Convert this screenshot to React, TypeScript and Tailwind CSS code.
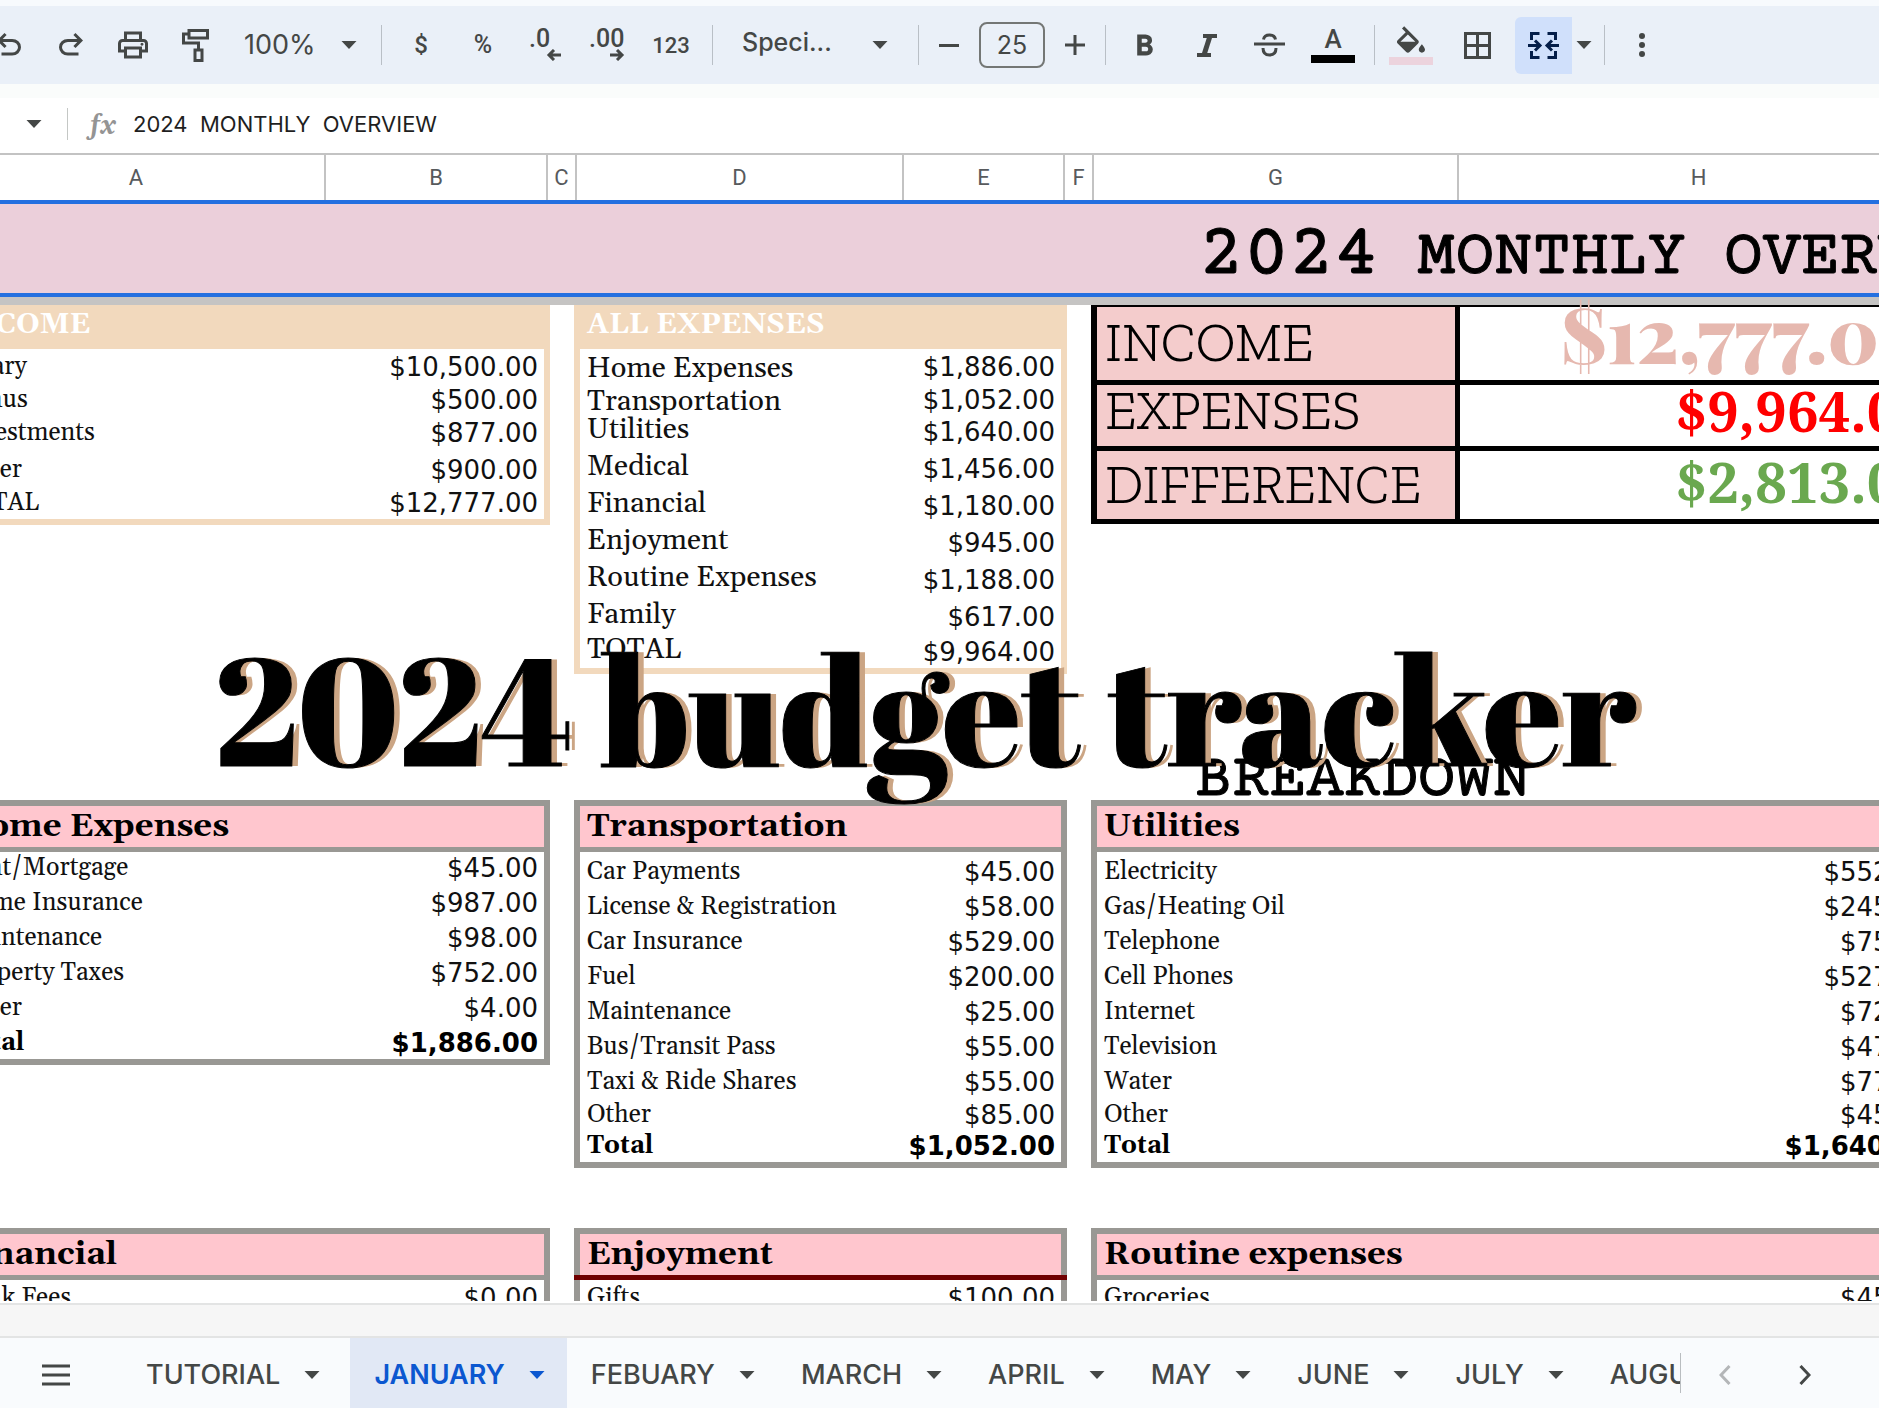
import type { ReactNode } from "react";

type Row = { label: string; amount: string; h: string; bold?: boolean; lift?: boolean };

const income: Row[] = [
  { label: "Salary", amount: "$10,500.00", h: "h-[33px]" },
  { label: "Bonus", amount: "$500.00", h: "h-[33px]" },
  { label: "Investments", amount: "$877.00", h: "h-[33px]" },
  { label: "Other", amount: "$900.00", h: "h-[37px]" },
  { label: "TOTAL", amount: "$12,777.00", h: "h-[33px]" },
];

const allExpenses: Row[] = [
  { label: "Home Expenses", amount: "$1,886.00", h: "h-[33px]" },
  { label: "Transportation", amount: "$1,052.00", h: "h-[33px]" },
  { label: "Utilities", amount: "$1,640.00", h: "h-[32px]", lift: true },
  { label: "Medical", amount: "$1,456.00", h: "h-[37px]", lift: true },
  { label: "Financial", amount: "$1,180.00", h: "h-[37px]", lift: true },
  { label: "Enjoyment", amount: "$945.00", h: "h-[37px]", lift: true },
  { label: "Routine Expenses", amount: "$1,188.00", h: "h-[37px]", lift: true },
  { label: "Family", amount: "$617.00", h: "h-[37px]", lift: true },
  { label: "TOTAL", amount: "$9,964.00", h: "h-[35px]", lift: true },
];

const home: Row[] = [
  { label: "Rent/Mortgage", amount: "$45.00", h: "h-[31px]" },
  { label: "Home Insurance", amount: "$987.00", h: "h-[35px]" },
  { label: "Maintenance", amount: "$98.00", h: "h-[35px]" },
  { label: "Property Taxes", amount: "$752.00", h: "h-[35px]" },
  { label: "Other", amount: "$4.00", h: "h-[35px]" },
  { label: "Total", amount: "$1,886.00", h: "h-[35px]", bold: true },
];

const transportation: Row[] = [
  { label: "Car Payments", amount: "$45.00", h: "h-[35px]" },
  { label: "License & Registration", amount: "$58.00", h: "h-[35px]" },
  { label: "Car Insurance", amount: "$529.00", h: "h-[35px]" },
  { label: "Fuel", amount: "$200.00", h: "h-[35px]" },
  { label: "Maintenance", amount: "$25.00", h: "h-[35px]" },
  { label: "Bus/Transit Pass", amount: "$55.00", h: "h-[35px]" },
  { label: "Taxi & Ride Shares", amount: "$55.00", h: "h-[35px]" },
  { label: "Other", amount: "$85.00", h: "h-[33px]" },
  { label: "Total", amount: "$1,052.00", h: "h-[31px]", bold: true },
];

const utilities: Row[] = [
  { label: "Electricity", amount: "$552.00", h: "h-[35px]" },
  { label: "Gas/Heating Oil", amount: "$245.00", h: "h-[35px]" },
  { label: "Telephone", amount: "$75.00", h: "h-[35px]" },
  { label: "Cell Phones", amount: "$527.00", h: "h-[35px]" },
  { label: "Internet", amount: "$72.00", h: "h-[35px]" },
  { label: "Television", amount: "$47.00", h: "h-[35px]" },
  { label: "Water", amount: "$77.00", h: "h-[35px]" },
  { label: "Other", amount: "$45.00", h: "h-[33px]" },
  { label: "Total", amount: "$1,640.00", h: "h-[31px]", bold: true },
];

const bankFees: Row[] = [{ label: "Bank Fees", amount: "$0.00", h: "h-[33px]" }];
const gifts: Row[] = [{ label: "Gifts", amount: "$100.00", h: "h-[33px]" }];
const groceries: Row[] = [{ label: "Groceries", amount: "$45.00", h: "h-[33px]" }];

const SHEET_GRID = "-ml-[55px] -mr-[64px] grid grid-cols-[605px_493px_minmax(0,1fr)] items-start gap-x-6";

function Caret({ className = "" }: { className?: string }) {
  return (
    <svg viewBox="0 0 16 8" className={`h-2 w-4 shrink-0 fill-current ${className}`} aria-hidden="true">
      <path d="M0.5 0h15L8 8z" />
    </svg>
  );
}

function Sep() {
  return <span className="mx-2 h-10 w-px shrink-0 bg-[#b9bfc6]" />;
}

function Tool({ label, w = "w-[62px]", children }: { label: string; w?: string; children: ReactNode }) {
  return (
    <button type="button" aria-label={label} className={`flex h-[58px] shrink-0 items-center justify-center ${w}`}>
      {children}
    </button>
  );
}

function Symbol({ d }: { d: string }) {
  return (
    <svg viewBox="0 -960 960 960" className="size-9 fill-current" aria-hidden="true">
      <path d={d} />
    </svg>
  );
}

function Toolbar() {
  return (
    <div className="border-t-[6px] border-[#f7fafd] bg-[#eaf0f8]">
      <div role="toolbar" aria-label="Formatting" className="-ml-[22px] flex h-[78px] items-center font-['Roboto','Liberation_Sans',sans-serif] text-[#444746]">
        <Tool label="Undo">
          <Symbol d="M280-200v-80h284q63 0 109.5-40T720-420q0-60-46.5-100T564-560H312l104 104-56 56-200-200 200-200 56 56-104 104h252q97 0 166.5 63T800-420q0 94-69.5 157T564-200H280Z" />
        </Tool>
        <Tool label="Redo">
          <Symbol d="M396-200q-97 0-166.5-63T160-420q0-94 69.5-157T396-640h252L544-744l56-56 200 200-200 200-56-56 104-104H396q-63 0-109.5 40T240-420q0 60 46.5 100T396-280h284v80H396Z" />
        </Tool>
        <Tool label="Print">
          <Symbol d="M640-640v-120H320v120h-80v-200h480v200h-80Zm-480 80h640-640Zm560 100q17 0 28.5-11.5T760-500q0-17-11.5-28.5T720-540q-17 0-28.5 11.5T680-500q0 17 11.5 28.5T720-460Zm-80 260v-160H320v160h320Zm80 80H240v-160H80v-240q0-51 35-85.5t85-34.5h560q51 0 85.5 34.5T880-520v240H720v160Zm80-240v-160q0-17-11.5-28.5T760-560H200q-17 0-28.5 11.5T160-520v160h80v-80h480v80h80Z" />
        </Tool>
        <Tool label="Paint format">
          <svg viewBox="0 0 27 33" className="h-[33px] w-[27px] fill-none stroke-current stroke-3" aria-hidden="true">
            <path d="M7 1.5h18.5v7.5H7zM7 5H1.5v9h15v6.5M13 21h7v10.5h-7z" />
          </svg>
        </Tool>
        <div className="relative w-[147px] shrink-0">
          <select aria-label="Zoom" className="h-[58px] w-full appearance-none bg-transparent pl-[18px] font-['Inter','Roboto',sans-serif] text-[27px]">
            <option>100%</option>
          </select>
          <Caret className="pointer-events-none absolute top-[25px] right-4" />
        </div>
        <Sep />
        <Tool label="Format as currency">
          <span className="text-2xl font-medium">$</span>
        </Tool>
        <Tool label="Format as percent">
          <span className="text-[25px] font-medium">%</span>
        </Tool>
        <Tool label="Decrease decimal places">
          <span className="flex w-8 flex-col text-left">
            <span className="text-[25px] leading-5 font-medium">.0</span>
            <svg viewBox="0 0 15 12" className="h-3 w-[15px] self-end fill-none stroke-current stroke-3" aria-hidden="true">
              <path d="M15 6H3M8 1L3 6l5 5" />
            </svg>
          </span>
        </Tool>
        <Tool label="Increase decimal places">
          <span className="flex w-9 flex-col text-left">
            <span className="text-[25px] leading-5 font-medium">.00</span>
            <svg viewBox="0 0 15 12" className="h-3 w-[15px] self-end fill-none stroke-current stroke-3" aria-hidden="true">
              <path d="M0 6h12M7 1l5 5-5 5" />
            </svg>
          </span>
        </Tool>
        <Tool label="More formats" w="w-[66px]">
          <span className="text-[22px] font-medium">123</span>
        </Tool>
        <Sep />
        <div className="relative w-[189px] shrink-0">
          <select aria-label="Font" className="h-[58px] w-full appearance-none bg-transparent pb-1 pl-[21px] font-['Inter','Roboto',sans-serif] text-[25px] font-medium">
            <option>Speci...</option>
          </select>
          <Caret className="pointer-events-none absolute top-[25px] right-[22px]" />
        </div>
        <Sep />
        <Tool label="Decrease font size" w="w-11">
          <span className="h-[3px] w-5 bg-current" />
        </Tool>
        <input aria-label="Font size" defaultValue="25" className="mx-2 h-[46px] w-[66px] shrink-0 rounded-lg border-2 border-[#747775] bg-transparent text-center font-['Inter','Roboto',sans-serif] text-[25px]" />
        <Tool label="Increase font size" w="w-11">
          <svg viewBox="0 0 20 20" className="size-5 stroke-current stroke-3" aria-hidden="true">
            <path d="M10 0v20M0 10h20" />
          </svg>
        </Tool>
        <Sep />
        <Tool label="Bold">
          <Symbol d="M272-200v-560h221q65 0 120 40t55 111q0 51-23 78.5T602-491q25 11 55.5 41t30.5 90q0 89-65 124.5T501-200H272Zm121-112h104q48 0 58.5-24.5T566-372q0-11-10.5-35.5T494-432H393v120Zm0-228h93q33 0 48-17t15-38q0-24-17-39t-44-15h-95v109Z" />
        </Tool>
        <Tool label="Italic">
          <svg viewBox="0 0 20 23" className="h-[23px] w-5 fill-none stroke-current" aria-hidden="true">
            <path d="M6 2h14M0 21h14" strokeWidth="4" />
            <path d="M13 2L7 21" strokeWidth="5" />
          </svg>
        </Tool>
        <Tool label="Strikethrough">
          <svg viewBox="0 0 31 24" className="h-6 w-[31px] fill-none stroke-current stroke-3" aria-hidden="true">
            <path d="M0 11h31M9.5 6.5C10 3.5 12 2 15.500 2s5.500 1.500 6 4.500M9 15c0 4.500 2.500 7 6.500 7s6.500-2.500 6.500-7" />
          </svg>
        </Tool>
        <Tool label="Text color" w="w-[66px]">
          <span className="flex flex-col items-center">
            <span className="text-[26px] leading-6 font-medium">A</span>
            <span className="mt-1 h-2 w-11 bg-black" />
          </span>
        </Tool>
        <Sep />
        <Tool label="Fill color" w="w-14">
          <span className="flex flex-col items-center">
            <svg viewBox="3 0 18 17" className="h-[27px] w-7 fill-current" aria-hidden="true">
              <path d="M16.56 8.94L7.620 0 6.210 1.410l2.380 2.380-5.150 5.150a1.490 1.490 0 000 2.120l5.500 5.500c.29.29.68.44 1.060.44s.77-.15 1.060-.44l5.500-5.500c.59-.58.59-1.530 0-2.120zM5.210 10L10 5.210 14.790 10H5.210zM19 11.500s-2 2.170-2 3.500c0 1.100.9 2 2 2s2-.9 2-2c0-1.330-2-3.500-2-3.500z" />
            </svg>
            <span className="mt-1 h-2 w-11 bg-[#ecd3dd]" />
          </span>
        </Tool>
        <Tool label="Borders" w="w-[76px]">
          <svg viewBox="0 0 27 27" className="size-[27px] fill-none stroke-current stroke-3" aria-hidden="true">
            <path d="M1.500 1.500h24v24h-24zM13.500 1v25M1 13.500h25" />
          </svg>
        </Tool>
        <button type="button" aria-label="Merge cells" aria-pressed="true" className="flex h-[57px] w-[57px] shrink-0 items-center justify-center rounded-l-md bg-[#d0e0fb] text-[#041e49]">
          <svg viewBox="0 0 31 27" className="h-[27px] w-[31px] fill-none stroke-current stroke-3" aria-hidden="true">
            <path d="M11.500 1.500H3.500V8M11.500 25.500H3.500V19M19.500 1.500h8V8M19.500 25.500h8V19M0 13.500h11M7 8.500l5 5-5 5M31 13.500H20M24 8.500l-5 5 5 5" />
          </svg>
        </button>
        <Tool label="Merge options" w="w-6">
          <Caret />
        </Tool>
        <Sep />
        <Tool label="More" w="w-[58px]">
          <svg viewBox="0 0 6 24" className="h-6 w-1.5 fill-current" aria-hidden="true">
            <circle cx="3" cy="3" r="3" />
            <circle cx="3" cy="12" r="3" />
            <circle cx="3" cy="21" r="3" />
          </svg>
        </Tool>
      </div>
    </div>
  );
}

function FormulaBar() {
  return (
    <div className="flex h-[69px] items-center border-t-[14px] border-[#fafcfb] bg-white pb-1">
      <button type="button" aria-label="Name box" className="flex h-10 w-[67px] shrink-0 items-center justify-center text-[#444746]">
        <Caret />
      </button>
      <span className="h-8 w-px bg-[#c4c7c5]" />
      <label htmlFor="formula" className="w-[65px] pt-1 pl-[22px] font-['Gelasio','Liberation_Serif',serif] text-[28px] leading-8 font-semibold text-[#949494] italic">
        fx
      </label>
      <input id="formula" defaultValue="2024  MONTHLY  OVERVIEW" className="h-10 flex-1 bg-transparent font-['Inter','Roboto',sans-serif] text-[22px] text-[#1f1f1f] outline-none" />
    </div>
  );
}

function ColumnHeaders() {
  return (
    <div className="-mr-[61px] -ml-[52px] grid h-[47px] grid-cols-[378px_222px_29px_327px_161px_29px_365px_minmax(0,1fr)] border-t-2 border-[#c3c3c3] bg-white font-['Roboto','Liberation_Sans',sans-serif] text-[22px] text-[#575a5d]">
      {["A", "B", "C", "D", "E", "F", "G", "H"].map((c) => (
        <div key={c} className="flex items-center justify-center border-r-2 border-[#c3c3c3]">
          {c}
        </div>
      ))}
    </div>
  );
}

function Rows({ rows, large = false }: { rows: Row[]; large?: boolean }) {
  return (
    <table className="mb-px w-full border-collapse text-[25px] leading-[30px] text-[#111]">
      <tbody>
        {rows.map((r) => (
          <tr key={r.label} className={r.bold ? "font-bold text-black" : ""}>
            <th scope="row" className={`p-0 pl-[7px] text-left align-bottom ${r.bold ? "font-bold" : "font-normal"}`}>
              <div className={`flex whitespace-nowrap ${r.h} ${large ? "text-[29px]" : ""} ${large && !r.lift ? "items-start overflow-hidden pt-[5px]" : "items-end"} ${r.lift ? "pb-0.5" : ""}`}>{r.label}</div>
            </th>
            <td className="p-0 pr-[6px] text-right align-bottom font-['DejaVu_Sans',Verdana,sans-serif] text-[26px]">{r.amount}</td>
          </tr>
        ))}
      </tbody>
    </table>
  );
}

function PeachPanel({ title, rows, large }: { title: string; rows: Row[]; large?: boolean }) {
  return (
    <section className="border-x-[6px] border-b-[6px] border-[#f2d9bd] bg-white">
      <h2 className="h-11 bg-[#f2d9bd] pt-1 pl-[7px] text-[29px] leading-[31px] font-bold text-white">{title}</h2>
      <Rows rows={rows} large={large} />
    </section>
  );
}

function PinkPanel({ title, rows, accent = false }: { title: string; rows: Row[]; accent?: boolean }) {
  return (
    <section className="border-[6px] border-[#999894] bg-white">
      <h2 className="bg-[#ffc6ce] pl-[7px] text-[33px] leading-[41px] font-bold text-black">{title}</h2>
      <div className={`-mx-[6px] h-[5px] ${accent ? "bg-[#700000]" : "bg-[#999894]"}`} />
      <Rows rows={rows} />
    </section>
  );
}

function Summary() {
  const label = "border-[5px] border-l-[6px] border-black bg-[#f4cccc] p-0 pl-2 text-left font-['Zilla_Slab','Noto_Serif',serif] text-[54px] font-light";
  const value = "border-[5px] border-black bg-white p-0 pr-2 text-right";
  return (
    <table className="w-full border-collapse text-black">
      <tbody>
        <tr className="h-[76px]">
          <th scope="row" className={`w-[363px] border-t-2 leading-[60px] ${label}`}>INCOME</th>
          <td className={`border-t-2 align-top font-['Playfair_Display','Liberation_Serif',serif] text-[76px] leading-[52px] font-black text-[#e6b8af] ${value}`}>$12,777.00</td>
        </tr>
        <tr className="h-[66px]">
          <th scope="row" className={`align-top leading-[52px] ${label}`}>EXPENSES</th>
          <td className={`align-top font-['Noto_Serif','DejaVu_Serif',serif] text-[56px] leading-[50px] font-bold text-[#ff0000] ${value}`}>$9,964.00</td>
        </tr>
        <tr className="h-[73px]">
          <th scope="row" className={`leading-[60px] ${label}`}>DIFFERENCE</th>
          <td className={`align-top font-['Noto_Serif','DejaVu_Serif',serif] text-[56px] leading-[60px] font-bold text-[#6aa84f] ${value}`}>$2,813.00</td>
        </tr>
      </tbody>
    </table>
  );
}

function Sheet() {
  return (
    <main className="relative min-h-0 flex-1 overflow-hidden font-['Gelasio','Liberation_Serif',serif]">
      <div className="border-y-4 border-[#2470e0] bg-[#ebcfda]">
        <div className={SHEET_GRID}>
          <h1 className="col-start-3 h-[89px] pt-2 pl-[108px] font-['Courier_Prime','DejaVu_Serif',serif] text-[64px] leading-[89px] whitespace-nowrap text-black [-webkit-text-stroke:1px_#000]">
            <span className="text-[75px]">2024</span> MONTHLY OVERVIEW
          </h1>
        </div>
      </div>
      <div className="h-2 bg-[#c5c4c3]" />
      <div className={SHEET_GRID}>
        <PeachPanel title="INCOME" rows={income} />
        <PeachPanel title="ALL EXPENSES" rows={allExpenses} large />
        <Summary />
      </div>
      <div className={SHEET_GRID}>
        <h2 className="col-start-3 h-[126px] pt-[78px] pl-[104px] font-['Courier_Prime','DejaVu_Serif',serif] text-[62px] leading-[60px] text-black [-webkit-text-stroke:1px_#000]">BREAKDOWN</h2>
      </div>
      <div className={SHEET_GRID}>
        <PinkPanel title="Home Expenses" rows={home} />
        <PinkPanel title="Transportation" rows={transportation} />
        <PinkPanel title="Utilities" rows={utilities} />
      </div>
      <div className={`mt-[60px] ${SHEET_GRID}`}>
        <PinkPanel title="Financial" rows={bankFees} />
        <PinkPanel title="Enjoyment" rows={gifts} accent />
        <PinkPanel title="Routine expenses" rows={groceries} />
      </div>
      <p className="pointer-events-none absolute inset-x-0 top-[408px] pr-7 text-center font-['Abril_Fatface','Liberation_Serif',serif] text-[151px] leading-[200px] whitespace-nowrap text-black [-webkit-text-stroke:1px_#000] [text-shadow:6px_0_#cba584]">
        2024 budget tracker
      </p>
    </main>
  );
}

function SheetTabs() {
  const tabs = ["TUTORIAL", "JANUARY", "FEBUARY", "MARCH", "APRIL", "MAY", "JUNE", "JULY", "AUGUST"];
  return (
    <footer className="shrink-0 border-t-2 border-white">
      <div className="h-[35px] border-y-2 border-[#e3e4e4] bg-[#f6f6f6]" />
      <div className="flex h-[70px] items-center bg-[#f9fbfd] font-['Inter','Roboto',sans-serif] text-[27px] font-medium text-[#444746]">
        <button type="button" aria-label="All sheets" className="flex h-full w-[122px] shrink-0 items-center pt-1 pl-[42px]">
          <svg viewBox="0 0 28 22" className="h-[22px] w-7 stroke-current stroke-3" aria-hidden="true">
            <path d="M0 2h28M0 11h28M0 20h28" />
          </svg>
        </button>
        <nav aria-label="Sheets" className="flex h-full min-w-0 flex-1 overflow-hidden">
          {tabs.map((t) => (
            <button
              type="button"
              key={t}
              className={`flex h-full shrink-0 items-center gap-6 pt-1 pr-[22px] pl-6 ${t === "JANUARY" ? "ml-2 bg-[#e1e8f5] font-semibold text-[#0b57d0]" : ""}`}
            >
              {t}
              <Caret />
            </button>
          ))}
        </nav>
        <span className="h-10 w-px bg-[#b9bdc0]" />
        <div className="flex shrink-0 pt-1 pr-[34px] pl-1">
          <button type="button" aria-label="Scroll left" className="flex w-20 justify-center text-[#b4b6b8]">
            <svg viewBox="0 0 12 20" className="h-5 w-3 fill-none stroke-current stroke-3" aria-hidden="true">
              <path d="M10.500 1L2 10l8.500 9" />
            </svg>
          </button>
          <button type="button" aria-label="Scroll right" className="flex w-20 justify-center">
            <svg viewBox="0 0 12 20" className="h-5 w-3 fill-none stroke-current stroke-3" aria-hidden="true">
              <path d="M1.500 1L10 10l-8.500 9" />
            </svg>
          </button>
        </div>
      </div>
    </footer>
  );
}

export default function App() {
  return (
    <div className="flex h-screen flex-col overflow-hidden bg-white">
      <Toolbar />
      <FormulaBar />
      <ColumnHeaders />
      <Sheet />
      <SheetTabs />
    </div>
  );
}
